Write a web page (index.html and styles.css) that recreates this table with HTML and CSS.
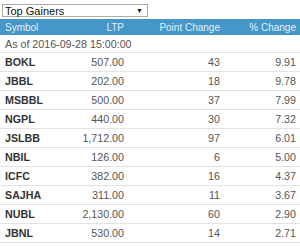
FILE: index.html
```html
<!DOCTYPE html>
<html>
<head>
<meta charset="utf-8">
<link rel="stylesheet" href="styles.css">
</head>
<body>
<div class="widget">
  <div class="picker">
    <span class="picker-label">Top Gainers</span>
    <span class="picker-arrow">&#9660;</span>
  </div>
  <table class="gainers">
    <colgroup>
      <col class="c-sym"><col class="c-ltp"><col class="c-pt"><col class="c-pct">
    </colgroup>
    <thead>
      <tr><th class="l">Symbol</th><th>LTP</th><th>Point Change</th><th>% Change</th></tr>
    </thead>
    <tbody>
      <tr class="asof"><td colspan="4">As of 2016-09-28 15:00:00</td></tr>
      <tr><td class="sym">BOKL</td><td>507.00</td><td>43</td><td>9.91</td></tr>
      <tr><td class="sym">JBBL</td><td>202.00</td><td>18</td><td>9.78</td></tr>
      <tr><td class="sym">MSBBL</td><td>500.00</td><td>37</td><td>7.99</td></tr>
      <tr><td class="sym">NGPL</td><td>440.00</td><td>30</td><td>7.32</td></tr>
      <tr><td class="sym">JSLBB</td><td>1,712.00</td><td>97</td><td>6.01</td></tr>
      <tr><td class="sym">NBIL</td><td>126.00</td><td>6</td><td>5.00</td></tr>
      <tr><td class="sym">ICFC</td><td>382.00</td><td>16</td><td>4.37</td></tr>
      <tr><td class="sym">SAJHA</td><td>311.00</td><td>11</td><td>3.67</td></tr>
      <tr><td class="sym">NUBL</td><td>2,130.00</td><td>60</td><td>2.90</td></tr>
      <tr><td class="sym">JBNL</td><td>530.00</td><td>14</td><td>2.71</td></tr>
    </tbody>
  </table>
</div>
</body>
</html>
```
FILE: styles.css
```css
html, body {
  margin: 0;
  padding: 0;
  background: #fff;
}
body {
  font-family: "Liberation Sans", Arial, sans-serif;
  font-size: 11px;
  color: #555;
}
.widget {
  width: 300px;
}
.picker {
  margin: 4px 0 0 2px;
  width: 142px;
  height: 11px;
  border: 1px solid #a9a9a9;
  display: flex;
  align-items: center;
  justify-content: space-between;
  padding: 0 0 0 2px;
  box-sizing: content-box;
  color: #111;
  font-size: 11px;
}
.picker-arrow {
  font-size: 7px;
  margin-right: 4px;
  color: #111;
}
.gainers {
  margin-top: 2px;
  width: 300px;
  border-collapse: collapse;
  table-layout: fixed;
}
.c-sym { width: 70px; }
.c-ltp { width: 58px; }
.c-pt { width: 96px; }
.c-pct { width: 76px; }
.gainers th {
  background: #4497c8;
  color: #e4eff7;
  font-weight: normal;
  font-size: 10px;
  height: 16px;
  padding: 0 4px;
  text-align: right;
}
.gainers th.l { text-align: left; padding-left: 5px; }
.gainers td {
  height: 18px;
  padding: 0 4px;
  font-size: 10.7px;
  border-bottom: 1px solid #e2e2e2;
  text-align: right;
}
.gainers td.sym {
  text-align: left;
  padding-left: 5px;
  font-weight: bold;
  color: #333;
}
.gainers tr.asof td {
  height: 17px;
  text-align: left;
  padding-left: 5px;
  color: #555;
}
```
